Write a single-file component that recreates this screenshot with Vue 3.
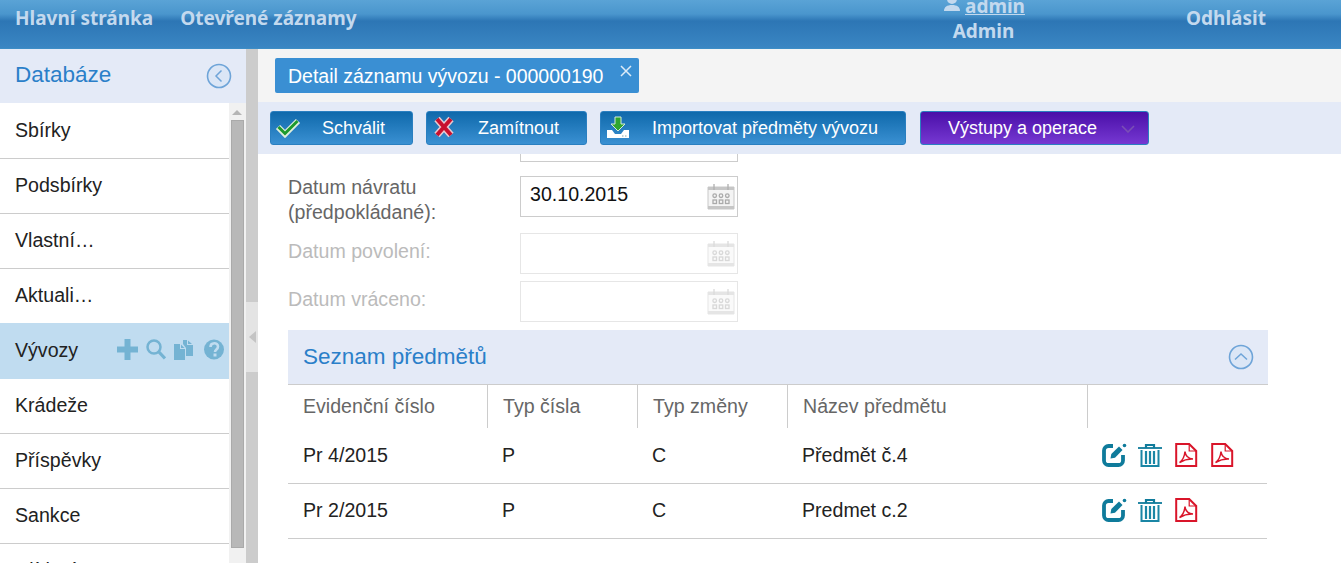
<script setup>
const menu = [
  { label: 'Sbírky' },
  { label: 'Podsbírky' },
  { label: 'Vlastní…' },
  { label: 'Aktuali…' },
  { label: 'Vývozy', active: true },
  { label: 'Krádeže' },
  { label: 'Příspěvky' },
  { label: 'Sankce' },
  { label: 'Hlídací…' },
]
const buttons = [
  { label: 'Schválit', icon: 'check', cls: 'b-approve' },
  { label: 'Zamítnout', icon: 'cross', cls: 'b-reject' },
  { label: 'Importovat předměty vývozu', icon: 'import', cls: 'b-import' },
]
const rows = [
  { no: 'Pr 4/2015', type: 'P', change: 'C', name: 'Předmět č.4', pdfs: 2 },
  { no: 'Pr 2/2015', type: 'P', change: 'C', name: 'Predmet c.2', pdfs: 1 },
]
const dates = [
  { label: 'Datum návratu (předpokládané):', value: '30.10.2015', cls: 'tall' },
  { label: 'Datum povolení:', value: '', cls: 'off' },
  { label: 'Datum vráceno:', value: '', cls: 'off' },
]
</script>

<template>
  <div class="app">
    <header class="top">
      <nav class="nav">
        <a>Hlavní stránka</a>
        <a>Otevřené záznamy</a>
      </nav>
      <div class="user">
        <div class="user-line">
          <svg width="18" height="16" viewBox="0 0 18 16"><circle cx="9" cy="3" r="5" fill="#c3d9ee"/><path d="M1 15c0-4 3-6 8-6s8 2 8 6z" fill="#c3d9ee"/></svg>
          <u>admin</u>
        </div>
        <div>Admin</div>
      </div>
      <a class="logout">Odhlásit</a>
    </header>

    <div class="body">
      <aside class="side">
        <div class="side-head">
          <span>Databáze</span>
          <svg class="round" width="26" height="26" viewBox="0 0 26 26"><circle cx="13" cy="13" r="11.5" fill="#dbe6f6" stroke="#6ea4d8" stroke-width="1.6"/><path d="M15.5 7.500 10 13l5.500 5.500" fill="none" stroke="#6ea4d8" stroke-width="1.500"/></svg>
        </div>
        <div class="side-body">
          <ul class="menu">
            <li v-for="m in menu" :key="m.label" :class="{ active: m.active }">
              <span>{{ m.label }}</span>
              <div v-if="m.active" class="tools">
                <svg width="21" height="21" viewBox="0 0 21 21"><path d="M7.500 0h6v7.500H21v6h-7.500V21h-6v-7.500H0v-6h7.500z" fill="#74b3d3"/></svg>
                <svg width="20" height="21" viewBox="0 0 20 21"><circle cx="8" cy="8" r="6.500" fill="none" stroke="#74b3d3" stroke-width="2.500"/><path d="m12.500 12.500 6.500 7" stroke="#74b3d3" stroke-width="3.200"/></svg>
                <svg width="20" height="21" viewBox="0 0 20 21"><path d="M0 5h6v5h5v11H0zM7 5.500V9h3.500zM9 1h4v5h6v11h-7V9L9 5zM14 1.500V5h4z" fill="#74b3d3"/></svg>
                <svg class="ic-help" width="20" height="21" viewBox="0 0 20 21"><circle cx="10" cy="10.500" r="10" fill="#74b3d3"/><path d="M6.500 8c0-5 7.500-5 7.500-.5 0 3-3 2.800-3 5.500" fill="none" stroke="#c0dcf0" stroke-width="2.600"/><rect x="9.500" y="14.500" width="3" height="3" fill="#c0dcf0"/></svg>
              </div>
            </li>
          </ul>
          <div class="sbar">
            <i class="sbar-up"></i>
            <i class="sbar-thumb"></i>
          </div>
        </div>
      </aside>

      <div class="split">
        <div class="split-handle"><i></i></div>
      </div>

      <main class="main">
        <div class="tabs">
          <div class="tab">
            <span>Detail záznamu vývozu - 000000190</span>
            <svg class="tab-x" width="12" height="12" viewBox="0 0 12 12"><path d="m1 1 10 10M11 1 1 11" stroke="#dcebf7" stroke-width="1.500"/></svg>
          </div>
        </div>

        <div class="toolbar">
          <button v-for="b in buttons" :key="b.label" class="btn" :class="b.cls">
            <svg v-if="b.icon === 'check'" class="btn-ic" width="26" height="22" viewBox="0 0 26 22">
              <path d="m3 11 7 7L23 5" fill="none" stroke="#dfeedd" stroke-width="6"/>
              <path d="m3.500 11 6.500 6.500L22.500 5" fill="none" stroke="#1d9a2c" stroke-width="3"/>
            </svg>
            <svg v-else-if="b.icon === 'cross'" class="btn-ic" width="24" height="22" viewBox="0 0 24 22">
              <path d="m5 3 14 16M19 3 5 19" stroke="#e8c9d0" stroke-width="7"/>
              <path d="m5 3 14 16M19 3 5 19" stroke="#c8102e" stroke-width="4"/>
            </svg>
            <svg v-else class="btn-ic" width="26" height="26" viewBox="0 0 26 26">
              <path d="M10 1h6v7h4l-7 7-7-7h4z" fill="#2fa52f" stroke="#d5ecd6"/>
              <path d="M2 14h5l3 4h6l3-4h5v8H2z" fill="#fff"/>
              <path d="M17 20h1.500M20 20h1.500" stroke="#8aa" stroke-width="1"/>
            </svg>
            <span>{{ b.label }}</span>
          </button>
          <button class="btn b-purple">
            <span>Výstupy a operace</span>
            <svg width="14" height="8" viewBox="0 0 14 8"><path d="m1 1 6 6 6-6" fill="none" stroke="#7a4fb5" stroke-width="1.600"/></svg>
          </button>
        </div>

        <div class="scroll">
          <div class="form">
            <div class="frow">
              <div class="flabel"></div>
              <div class="finput"></div>
            </div>
            <div v-for="d in dates" :key="d.label" class="frow" :class="d.cls">
              <div class="flabel">{{ d.label }}</div>
              <div class="finput">
                <span>{{ d.value }}</span>
                <svg width="28" height="27" viewBox="0 0 28 27">
                  <path d="M1 4h26v22H1z" fill="#f4f4f4" stroke="#c8c8c8"/>
                  <path d="M1 4h26v3H1zM1 23h26v3H1z" fill="#c6c6c6"/>
                  <path d="M7 1v6M21 1v6" stroke="#b0b0b0" stroke-width="1.300"/>
                  <g fill="none" stroke="#aaa" stroke-width="1.300">
                    <circle cx="7.700" cy="12.700" r="1.800"/><circle cx="14" cy="12.700" r="1.800"/><circle cx="20.300" cy="12.700" r="1.800"/>
                    <rect x="6" y="17" width="3.500" height="3.500"/><rect x="12.300" y="17" width="3.500" height="3.500"/><rect x="18.500" y="17" width="3.500" height="3.500"/>
                  </g>
                </svg>
              </div>
            </div>
          </div>

          <section class="panel">
            <div class="panel-head">
              <span>Seznam předmětů</span>
              <svg width="26" height="26" viewBox="0 0 26 26"><circle cx="13" cy="13" r="11.500" fill="#dbe6f6" stroke="#6ea4d8" stroke-width="1.600"/><path d="M7 15.500 13 10l6 5.500" fill="none" stroke="#6ea4d8" stroke-width="1.500"/></svg>
            </div>
            <div class="thead">
              <div>Evidenční číslo</div>
              <div>Typ čísla</div>
              <div>Typ změny</div>
              <div>Název předmětu</div>
              <div></div>
            </div>
            <div v-for="r in rows" :key="r.no" class="trow">
              <div>{{ r.no }}</div>
              <div>{{ r.type }}</div>
              <div>{{ r.change }}</div>
              <div>{{ r.name }}</div>
              <div class="acts">
                <svg class="ic-edit" width="25" height="24" viewBox="0 0 25 24">
                  <path d="M11 3H6.500A4.500 4.500 0 0 0 2 7.500v10A4.500 4.500 0 0 0 6.500 22h10a4.500 4.500 0 0 0 4.500-4.500V12" fill="none" stroke="#0f7b9b" stroke-width="3.800"/>
                  <path d="m8.500 15.500.8-4.500L17 3.500l3.500 3.500-7.500 7.800z" fill="#0f7b9b"/>
                  <circle cx="22.500" cy="2.500" r="1.800" fill="#0f7b9b"/>
                </svg>
                <svg width="24" height="24" viewBox="0 0 24 24">
                  <path d="M0 5h24" stroke="#0f7b9b" stroke-width="1.800"/>
                  <path d="M8 5V2h8v3" fill="none" stroke="#0f7b9b" stroke-width="2.200"/>
                  <path d="M3.500 7v16h17V7" fill="none" stroke="#1a86a5" stroke-width="2"/>
                  <path d="M8 8v13M12 8v13M16 8v13" stroke="#1a86a5" stroke-width="2.200"/>
                </svg>
                <svg v-for="n in r.pdfs" :key="n" width="23" height="24" viewBox="0 0 23 24">
                  <path d="M1.200 1h13l7 7v15h-20z" fill="#fff" stroke="#d9152a" stroke-width="2"/>
                  <path d="M14.200 1v7h7" fill="none" stroke="#d9152a" stroke-width="1.200"/>
                  <path d="M4.500 19.500c3-2 5-6 5.500-11 .5 5 3 7 8 7.500-4-.2-9 .8-13.500 3.500z" fill="none" stroke="#d9152a" stroke-width="1.500"/>
                </svg>
              </div>
            </div>
          </section>
        </div>
      </main>
    </div>
  </div>
</template>

<style>
html, body { margin: 0; overflow: hidden; }
</style>

<style scoped>
.app { width: 1341px; height: 563px; overflow: hidden; font-family: "Liberation Sans", Arial, sans-serif; font-size: 19.600px; color: #222; display: flex; flex-direction: column; }
.top { height: 49px; flex: none; box-sizing: border-box; border-bottom: 1px solid #3d8dc6; background: linear-gradient(#5aa3d6 0, #4a96cd 14px, #2d76b5 21px, #3a86c3 48px); display: flex; position: relative; color: #c3d9ee; font-family: "Noto Sans", "Open Sans", sans-serif; font-weight: 700; font-size: 19px; }
.nav { display: flex; gap: 27px; padding: 6px 0 0 15px; line-height: 25px; }
.user { position: absolute; left: 943px; top: -6px; width: 81px; text-align: center; line-height: 25px; }
.user-line { display: flex; align-items: center; gap: 4px; height: 25px; }
.user-line svg { margin-top: -5px; flex: none; }
.logout { position: absolute; left: 1186px; top: 6px; line-height: 25px; }

.body { flex: 1; display: flex; min-height: 0; }
.side { width: 246px; flex: none; display: flex; flex-direction: column; background: #fff; }
.side-head { height: 54px; flex: none; box-sizing: border-box; padding: 0 14px 2px 15px; background: #e4eaf7; display: flex; align-items: center; justify-content: space-between; font-size: 22.500px; color: #2a7fc9; }
.side-head .round { margin-top: 2px; }
.side-body { flex: 1; min-height: 0; display: flex; overflow: hidden; }
.menu { list-style: none; margin: 0; padding: 1px 0 0; flex: 1; }
.menu li { box-sizing: border-box; height: 55px; border-bottom: 1px solid #ccc; display: flex; align-items: flex-start; justify-content: space-between; padding: 0 5px 0 15px; line-height: 52px; }
.menu li.active { height: 56px; margin-top: -1px; background: #c0dcf0; border-bottom: 0; line-height: 55px; }
.tools { display: flex; align-items: center; gap: 8px; margin-top: 16px; }
.ic-help { margin-left: 2px; }
.sbar { width: 17px; flex: none; background: #f1f1f1; position: relative; }
.sbar-up { position: absolute; left: 3px; top: 7px; border: 5px solid transparent; border-top: 0; border-bottom-color: #b5b5b5; }
.sbar-thumb { position: absolute; left: 2px; top: 17px; width: 13px; height: 428px; box-sizing: border-box; border: 1px solid #aaa; background: #b8b8b8; }
.split { width: 12px; flex: none; background: #ccc; padding-top: 253px; box-sizing: border-box; }
.split-handle { height: 70px; background: #e4e4e4; display: flex; align-items: center; justify-content: center; }
.split-handle i { border: 6px solid transparent; border-left: 0; border-right: 7px solid #c4c4c4; }

.main { flex: 1; min-width: 0; display: flex; flex-direction: column; background: #fff; }
.tabs { height: 53px; flex: none; background: #f4f4f4; padding: 9px 0 0 17px; box-sizing: border-box; }
.tab { width: 364px; height: 35px; box-sizing: border-box; background: #3a8fd3; border-radius: 2px; color: #fff; font-size: 19.500px; line-height: 37px; padding-left: 13px; position: relative; }
.tab-x { position: absolute; right: 7px; top: 7px; }
.toolbar { height: 52px; flex: none; background: #e4eaf7; display: flex; padding: 9px 0 0 12px; gap: 13px; box-sizing: border-box; position: relative; z-index: 1; }
.btn { height: 34px; box-sizing: border-box; border: 1px solid #2a7fc0; border-radius: 3px; background: linear-gradient(#0f69ab, #3a90d2); color: #fff; font: inherit; font-size: 18px; padding: 0; position: relative; display: flex; align-items: center; justify-content: center; }
.btn-ic { position: absolute; left: 4px; top: 4px; }
.b-approve { width: 143px; padding-left: 24px; }
.b-reject { width: 161px; padding-left: 24px; }
.b-reject .btn-ic { left: 5px; }
.b-import { width: 306px; padding-left: 24px; }
.b-purple { width: 229px; margin-left: 1px; background: linear-gradient(#4a0fa8, #7638d2); padding-right: 24px; }
.b-purple svg { position: absolute; right: 13px; top: 13px; }

.scroll { flex: 1; min-height: 0; overflow: hidden; padding-left: 30px; }
.form { margin-top: -33px; }
.frow { display: flex; height: 41px; margin-bottom: 14px; width: 480px; }
.flabel { width: 232px; flex: none; color: #666; line-height: 25px; margin-top: -1px; padding-right: 40px; box-sizing: border-box; }
.finput { width: 218px; height: 41px; box-sizing: border-box; border: 1px solid #ccc; display: flex; align-items: flex-start; justify-content: space-between; padding: 3px 2px 0 9px; color: #111; line-height: 29px; }
.frow.tall { margin-bottom: 16px; }
.frow.off { margin-bottom: 7px; }
.off .flabel { color: #bbb; line-height: 36px; margin-top: 0; }
.off .finput { border-color: #e6e6e6; }
.off .finput svg { opacity: .45; margin-top: 3px; }
.tall .finput svg { margin-top: 3px; }
.panel { width: 980px; margin-top: 8px; }
.panel-head { height: 55px; box-sizing: border-box; background: #e4eaf7; border-bottom: 1px solid #ccc; display: flex; align-items: center; justify-content: space-between; padding: 0 14px 0 15px; font-size: 22.500px; color: #2a7fc9; }
.thead, .trow { display: grid; width: 979px; grid-template-columns: 200px 150px 150px 300px 179px; }
.thead { height: 43px; margin-bottom: 1px; color: #666; line-height: 43px; }
.thead > div { padding-left: 15px; border-right: 1px solid #ccc; }
.thead > div:last-child { border-right: 0; }
.trow { height: 55px; box-sizing: border-box; border-bottom: 1px solid #ccc; line-height: 52px; color: #222; }
.trow > div { padding-left: 15px; }
.trow > div:nth-child(2), .trow > div:nth-child(3), .trow > div:nth-child(4) { padding-left: 14px; }
.trow > .acts { display: flex; align-items: center; gap: 13px; padding-left: 14px; padding-bottom: 2px; }
.ic-edit { margin-right: -2px; }
</style>
